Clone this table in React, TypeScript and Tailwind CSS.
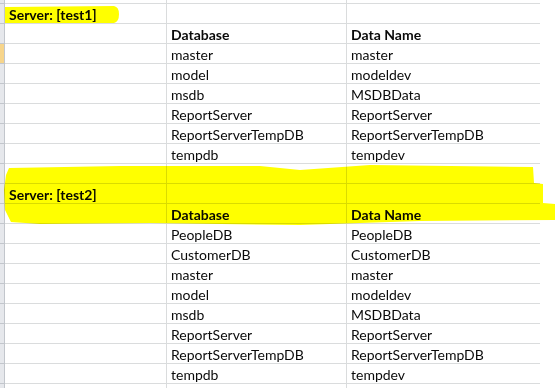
import React from "react";

type Row = { a?: string; b?: string; c?: string; bold?: boolean; active?: boolean };

const rows: Row[] = [
  { a: "Server: [test1]", bold: true },
  { b: "Database", c: "Data Name", bold: true },
  { b: "master", c: "master", active: true },
  { b: "model", c: "modeldev" },
  { b: "msdb", c: "MSDBData" },
  { b: "ReportServer", c: "ReportServer" },
  { b: "ReportServerTempDB", c: "ReportServerTempDB" },
  { b: "tempdb", c: "tempdev" },
  {},
  { a: "Server: [test2]", bold: true },
  { b: "Database", c: "Data Name", bold: true },
  { b: "PeopleDB", c: "PeopleDB" },
  { b: "CustomerDB", c: "CustomerDB" },
  { b: "master", c: "master" },
  { b: "model", c: "modeldev" },
  { b: "msdb", c: "MSDBData" },
  { b: "ReportServer", c: "ReportServer" },
  { b: "ReportServerTempDB", c: "ReportServerTempDB" },
  { b: "tempdb", c: "tempdev" },
  {},
];

function Cell({ text, bold, className }: { text?: string; bold?: boolean; className: string }) {
  return (
    <div
      className={`${className} h-full flex items-end px-[4px] border-b border-r border-[#dadcdd] whitespace-nowrap ${
        bold ? "font-bold" : ""
      }`}
    >
      {text}
    </div>
  );
}

export default function App() {
  return (
    <div
      className="relative w-[555px] h-[388px] overflow-hidden bg-white text-[14px] leading-[16px] text-[#0a0a0a]"
      style={{ fontFamily: "Lato, 'Noto Sans', sans-serif" }}
    >
      <div className="flex h-[4px]">
        <div className="w-[5px] h-full bg-[#e6e8ec] border-r border-b border-[#c2c6cc]" />
        <div className="w-[162px] h-full border-b border-r border-[#dadcdd]" />
        <div className="w-[180px] h-full border-b border-r border-[#dadcdd]" />
        <div className="w-[193px] h-full border-b border-[#dadcdd]" />
      </div>
      {rows.map((r, i) => (
        <div key={i} className="flex h-[20px]">
          <div
            className={`w-[5px] h-full border-r border-b border-[#c2c6cc] ${
              r.active ? "bg-[#f7d58b]" : "bg-[#e6e8ec]"
            }`}
          />
          <Cell className="w-[162px]" text={r.a} bold={r.bold} />
          <Cell className="w-[180px]" text={r.b} bold={r.bold} />
          <div
            className={`w-[193px] h-full flex items-end px-[4px] border-b border-[#dadcdd] whitespace-nowrap ${
              r.bold ? "font-bold" : ""
            }`}
          >
            {r.c}
          </div>
        </div>
      ))}

      {/* highlighter marks */}
      <svg
        className="absolute inset-0 pointer-events-none mix-blend-multiply"
        width="555"
        height="388"
        viewBox="0 0 555 388"
      >
        <path d="M5 7 L114 6 Q119 7 119 14 Q119 22 114 23 L5 23 Z" fill="#ffff00" />
        <path
          d="M9 168 L120 166 L260 166 L300 170 L370 165 L533 167 L534 183 L543 184 L543 203 L555 204 L555 220 L420 221 L300 225 L150 223 L40 224 L11 222 L5 210 L4 190 L6 175 Z"
          fill="#ffff00"
        />
      </svg>
    </div>
  );
}
